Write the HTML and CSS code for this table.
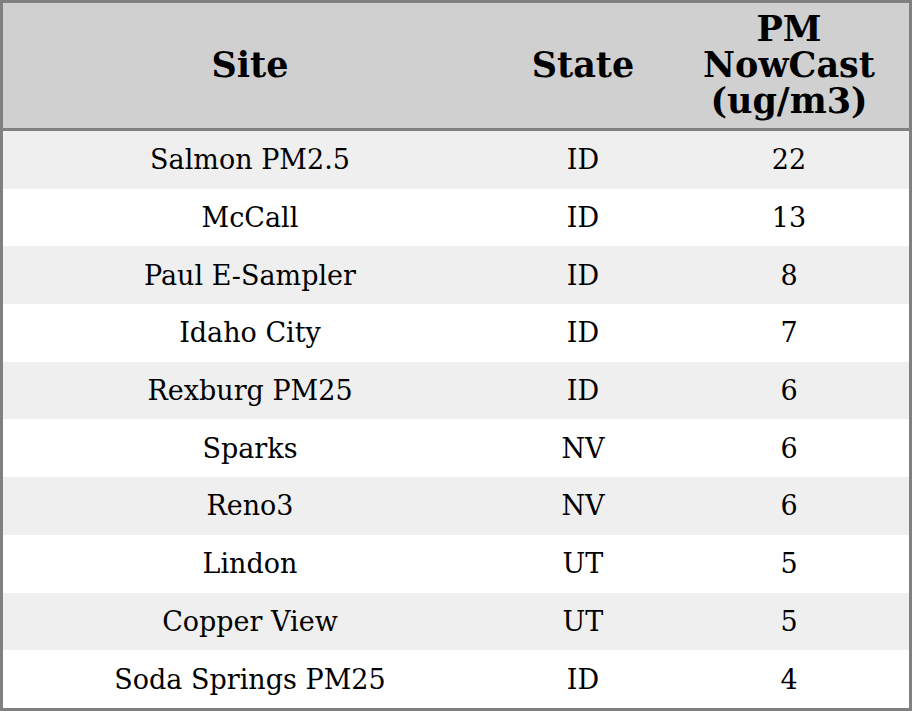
FILE: index.html
```html
<!DOCTYPE html>
<html>
<head>
<meta charset="utf-8">
<link rel="stylesheet" href="styles.css">
</head>
<body>
<table class="data">
  <thead>
    <tr>
      <th class="c-site">Site</th>
      <th class="c-state">State</th>
      <th class="c-pm">PM<br>NowCast<br>(ug/m3)</th>
    </tr>
  </thead>
  <tbody>
    <tr><td>Salmon PM2.5</td><td>ID</td><td>22</td></tr>
    <tr><td>McCall</td><td>ID</td><td>13</td></tr>
    <tr><td>Paul E-Sampler</td><td>ID</td><td>8</td></tr>
    <tr><td>Idaho City</td><td>ID</td><td>7</td></tr>
    <tr><td>Rexburg PM25</td><td>ID</td><td>6</td></tr>
    <tr><td>Sparks</td><td>NV</td><td>6</td></tr>
    <tr><td>Reno3</td><td>NV</td><td>6</td></tr>
    <tr><td>Lindon</td><td>UT</td><td>5</td></tr>
    <tr><td>Copper View</td><td>UT</td><td>5</td></tr>
    <tr><td>Soda Springs PM25</td><td>ID</td><td>4</td></tr>
  </tbody>
</table>
</body>
</html>
```
FILE: styles.css
```css
html, body {
  margin: 0;
  padding: 0;
  background: #ffffff;
}
.data {
  width: 912px;
  height: 711px;
  border-collapse: separate;
  border-spacing: 0;
  border: 3px solid #808080;
  box-sizing: border-box;
  table-layout: fixed;
  font-family: "DejaVu Serif", serif;
  color: #000;
}
.data th {
  background: #d0d0d0;
  font-weight: bold;
  font-size: 35px;
  line-height: 36px;
  height: 123px;
  padding: 0 0 2px 0;
  border-bottom: 3px solid #808080;
  text-align: center;
  vertical-align: middle;
}
.c-site { width: 494px; }
.c-state { width: 172px; }
.c-pm { width: 240px; }
.data td {
  font-size: 27px;
  text-align: center;
  vertical-align: middle;
  padding: 0;
  height: 57.7px;
}
.data tbody tr:nth-child(odd) td {
  background: #efefef;
}
.data tbody tr:nth-child(even) td {
  background: #ffffff;
}
```
